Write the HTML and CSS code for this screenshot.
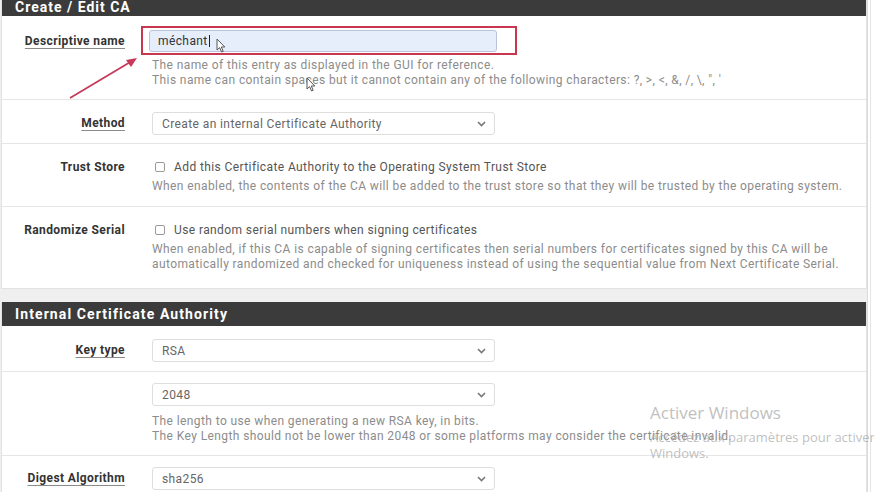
FILE: index.html
```html
<!DOCTYPE html>
<html lang="en">
<head>
<meta charset="utf-8">
<title>Create / Edit CA</title>
<link rel="stylesheet" href="styles.css">
</head>
<body>
<div class="screen">
  <section class="panel">
    <h2 class="panel-heading heading-cropped">Create / Edit CA</h2>
    <div class="panel-body">
      <div class="row row-name">
        <div class="lbl"><span class="lbl-u">Descriptive name</span></div>
        <div class="ctl">
          <div class="field-wrap">
            <div class="input input-autofill">méchant<span class="text-caret"></span></div>
            <span class="annot-box"></span>
            <svg class="pointer pointer-a" width="10" height="15" viewBox="0 0 10 15"><path d="M1 1 L1 12 L3.6 9.6 L5.6 14 L7.2 13.3 L5.3 9 L8.8 9 Z" fill="#fff" stroke="#555" stroke-width="1"/></svg>
          </div>
          <p class="help">The name of this entry as displayed in the GUI for reference.<br>This name can contain spaces but it cannot contain any of the following characters: ?, &gt;, &lt;, &amp;, /, \, ", '</p>
          <svg class="pointer pointer-b" width="10" height="15" viewBox="0 0 10 15"><path d="M1 1 L1 12 L3.6 9.6 L5.6 14 L7.2 13.3 L5.3 9 L8.8 9 Z" fill="#fff" stroke="#555" stroke-width="1"/></svg>
        </div>
      </div>
      <div class="row row-method">
        <div class="lbl"><span class="lbl-u">Method</span></div>
        <div class="ctl">
          <div class="select"><span>Create an internal Certificate Authority</span><svg class="chev" width="9" height="6" viewBox="0 0 9 6"><path d="M1 1 L4.5 4.5 L8 1" fill="none" stroke="#777" stroke-width="1.6"/></svg></div>
        </div>
      </div>
      <div class="row row-check">
        <div class="lbl lbl-check">Trust Store</div>
        <div class="ctl">
          <div class="check-line"><span class="checkbox"></span>Add this Certificate Authority to the Operating System Trust Store</div>
          <p class="help help-tight">When enabled, the contents of the CA will be added to the trust store so that they will be trusted by the operating system.</p>
        </div>
      </div>
      <div class="row row-check row-last">
        <div class="lbl lbl-check">Randomize Serial</div>
        <div class="ctl">
          <div class="check-line"><span class="checkbox"></span>Use random serial numbers when signing certificates</div>
          <p class="help help-tight">When enabled, if this CA is capable of signing certificates then serial numbers for certificates signed by this CA will be automatically randomized and checked for uniqueness instead of using the sequential value from Next Certificate Serial.</p>
        </div>
      </div>
    </div>
  </section>

  <section class="panel panel-second">
    <h2 class="panel-heading">Internal Certificate Authority</h2>
    <div class="panel-body">
      <div class="row row-key">
        <div class="lbl"><span class="lbl-u">Key type</span></div>
        <div class="ctl">
          <div class="select"><span>RSA</span><svg class="chev" width="9" height="6" viewBox="0 0 9 6"><path d="M1 1 L4.5 4.5 L8 1" fill="none" stroke="#777" stroke-width="1.6"/></svg></div>
        </div>
      </div>
      <div class="row row-len">
        <div class="lbl"></div>
        <div class="ctl">
          <div class="select"><span>2048</span><svg class="chev" width="9" height="6" viewBox="0 0 9 6"><path d="M1 1 L4.5 4.5 L8 1" fill="none" stroke="#777" stroke-width="1.6"/></svg></div>
          <p class="help help-len">The length to use when generating a new RSA key, in bits.<br>The Key Length should not be lower than 2048 or some platforms may consider the certificate invalid.</p>
        </div>
      </div>
      <div class="row row-digest">
        <div class="lbl"><span class="lbl-u">Digest Algorithm</span></div>
        <div class="ctl">
          <div class="select"><span>sha256</span><svg class="chev" width="9" height="6" viewBox="0 0 9 6"><path d="M1 1 L4.5 4.5 L8 1" fill="none" stroke="#777" stroke-width="1.6"/></svg></div>
        </div>
      </div>
    </div>
  </section>
</div>

<svg class="annot-arrow" width="90" height="60" viewBox="0 0 90 60">
  <line x1="6" y1="43" x2="68" y2="6" stroke="#c63a5a" stroke-width="1.8"/>
  <path d="M73 3 L62 5 L67 12 Z" fill="#c63a5a"/>
</svg>

<div class="watermark">
  <div class="wm-title">Activer Windows</div>
  <div class="wm-sub">Accédez aux paramètres pour activer</div>
  <div class="wm-sub">Windows.</div>
</div>
</body>
</html>
```

FILE: styles.css
```css
* { box-sizing: border-box; }

html, body {
  margin: 0;
  padding: 0;
}

body {
  width: 874px;
  height: 492px;
  overflow: hidden;
  background: #ffffff;
  font-family: Roboto, "Liberation Sans", Arial, sans-serif;
  font-size: 12px;
  letter-spacing: 0.4px;
  color: #444;
  position: relative;
}

.screen {
  width: 868px;
  background: #efefef;
  border-right: 1px solid #dcdcdc;
  box-shadow: 2px 0 0 #ffffff, 3px 0 0 #e4e4e4;
}

.panel {
  background: #ffffff;
  border: 1px solid #e2e2e2;
  border-top: 0;
  margin-left: 1px;
}

.panel-second {
  margin-top: 13px;
}

.panel-heading {
  margin: 0;
  background: #3b3b3b;
  color: #ffffff;
  font-family: Roboto, "Liberation Sans", Arial, sans-serif;
  font-size: 14px;
  font-weight: 700;
  letter-spacing: 1.1px;
  height: 24px;
  line-height: 24px;
  padding-left: 13px;
}

.heading-cropped {
  height: 16px;
  line-height: 14px;
  letter-spacing: 1px;
}

.row {
  display: grid;
  grid-template-columns: 123px 1fr;
  column-gap: 27px;
  border-bottom: 1px solid #e6e6e6;
}

.row-name { padding: 14px 0 11px; }
.row-method { padding: 12px 0 8px; }
.row-check { padding: 13px 0 12px; }
.row-last { border-bottom: 0; padding-bottom: 16px; }
.row-key { padding: 13px 0 9px; }
.row-len { padding: 11px 0 11px; }
.row-digest { padding: 11px 0 10px; border-bottom: 0; }

.lbl {
  text-align: right;
  font-weight: 700;
  color: #333;
  line-height: 22px;
  white-space: nowrap;
}

.lbl-check {
  line-height: 20px;
}

.lbl-u {
  text-decoration: underline;
  text-decoration-color: #8a8a8a;
  text-underline-offset: 3px;
}

.ctl {
  position: relative;
  min-width: 0;
}

.field-wrap {
  position: relative;
  width: 345px;
}

.input {
  height: 22px;
  line-height: 20px;
  padding: 0 8px;
  border: 1px solid #b9c4d8;
  border-radius: 3px;
  color: #333;
  background: #ffffff;
}

.input-autofill {
  background: #e6eefb;
  margin-left: -3px;
}

.text-caret {
  display: inline-block;
  width: 1px;
  height: 12px;
  background: #222;
  vertical-align: -2px;
  margin-left: 1px;
}

.annot-box {
  position: absolute;
  left: -11px;
  top: -4px;
  width: 376px;
  height: 29px;
  border: 2px solid #c8374f;
  pointer-events: none;
}

.pointer {
  position: absolute;
}

.pointer-a {
  left: 64px;
  top: 8px;
}

.pointer-b {
  left: 154px;
  top: 47px;
}

.select {
  width: 343px;
  height: 23px;
  border: 1px solid #dedede;
  border-radius: 3px;
  padding: 0 8px 0 9px;
  display: flex;
  align-items: center;
  justify-content: space-between;
  color: #666;
  background: #ffffff;
}

.help {
  margin: 6px 0 0;
  line-height: 15px;
  color: #8c8c8c;
  padding-right: 8px;
}

.help-tight {
  margin-top: 2px;
}

.help-len {
  margin-top: 8px;
}

.check-line {
  display: flex;
  align-items: center;
  line-height: 20px;
  color: #555;
}

.checkbox {
  width: 10px;
  height: 10px;
  border: 1px solid #9a9a9a;
  border-radius: 2px;
  margin: 0 9px 0 3px;
  background: #fff;
}

.annot-arrow {
  position: absolute;
  left: 64px;
  top: 55px;
}

.watermark {
  position: absolute;
  left: 650px;
  top: 401px;
  color: rgba(170, 170, 170, 0.75);
  font-family: "Open Sans", "Noto Sans", sans-serif;
  letter-spacing: 0;
  white-space: nowrap;
}

.wm-title {
  font-size: 17px;
  line-height: 24px;
  margin-bottom: 4px;
}

.wm-sub {
  font-size: 13px;
  line-height: 16px;
}
```
